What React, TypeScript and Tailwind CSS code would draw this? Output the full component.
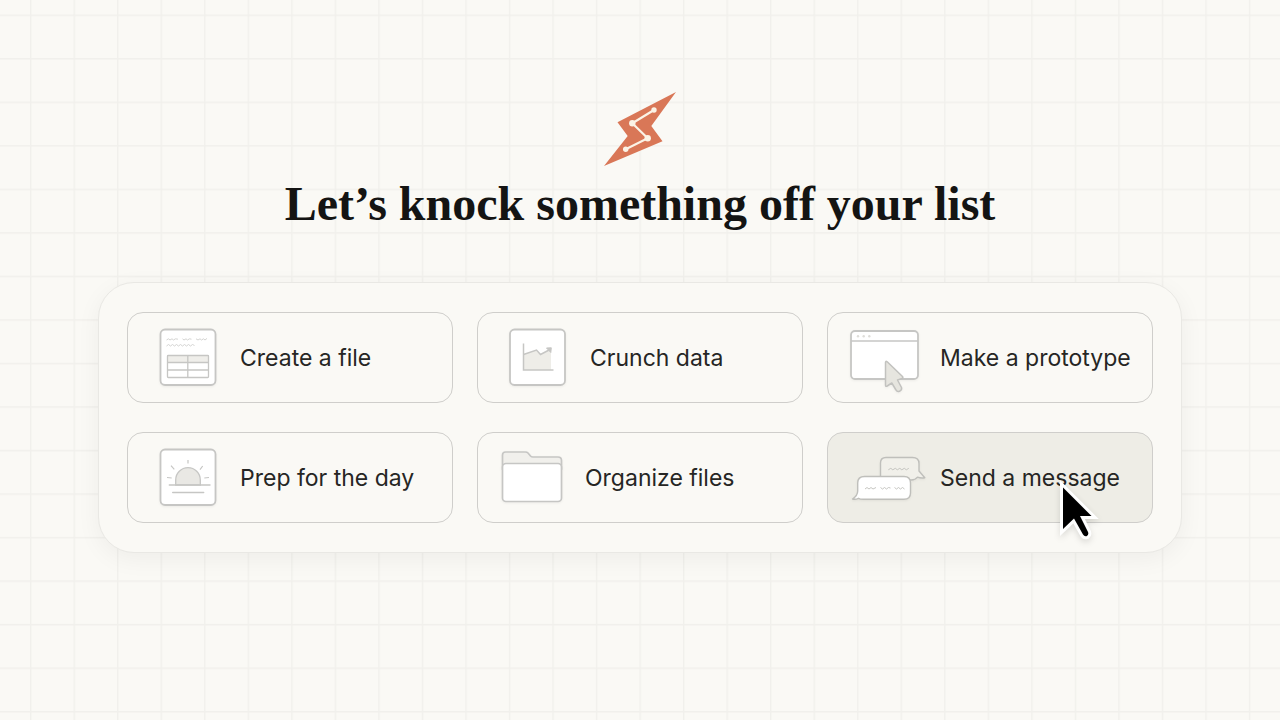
import type { ReactNode } from 'react';

type Task = {
  label: string;
  icon: ReactNode;
  active?: boolean;
};

function GridBackground() {
  return (
    <svg
      className="absolute inset-0 h-full w-full"
      viewBox="0 0 1280 720"
      preserveAspectRatio="xMidYMid slice"
      aria-hidden="true"
    >
      <defs>
        <pattern id="grid" x="30" y="14.5" width="43.53" height="43.53" patternUnits="userSpaceOnUse">
          <path d="M0.7 0V43.53M0 0.7H43.53" stroke="#f1f0ec" strokeWidth="1.4" fill="none" />
        </pattern>
      </defs>
      <rect width="1280" height="720" fill="url(#grid)" />
    </svg>
  );
}

function Logo() {
  return (
    <svg className="h-[74px] w-[72px]" viewBox="0 0 72 74" aria-hidden="true">
      <path d="M72 0L47.3 34L58.5 49.3L0 74L23.7 44L13.5 30.3Z" fill="#d97757" />
      <path d="M50 18L28.3 31.3L43.7 46.3L21.7 57.3" fill="none" stroke="#fbf3e6" strokeWidth="2.2" />
      <g fill="#fbf3e6">
        <circle cx="50" cy="18" r="2.7" />
        <circle cx="28.3" cy="31.3" r="3.2" />
        <circle cx="43.7" cy="46.3" r="3.2" />
        <circle cx="21.7" cy="57.3" r="2.7" />
      </g>
    </svg>
  );
}

function FileIcon() {
  return (
    <svg
      className="h-[57px] w-20 shrink-0 overflow-visible drop-shadow-xs"
      viewBox="0 0 80 57"
      fill="none"
      stroke="#c6c6c4"
      aria-hidden="true"
    >
      <rect x="12.5" y="0.5" width="55" height="55.5" rx="4.5" fill="#fff" strokeWidth="1.8" />
      <g stroke="#cfcfcd" strokeWidth="0.9">
        <path d="M18.5 11l2-1.2 1.5 1.2 2-1.2 1.5 1.2 2-1.2 2.5.4M34.5 9.8l1.5 1.2 2-1.2 1.5 1.2 2-1.2 2 .4M48 9.800l2 1.2 2-1.2 1.5 1.2 2-1.2 1.5 1.2 2-1.6" />
        <path d="M18.500 17l2-1.500 2 1.500 2-1.500 2 1.500 2-1.500 2 1.500 2-1.500 2 1.500 2-1.500 2 1.500 2-1.500 2 1.500 2-1.500 2 1" />
      </g>
      <path d="M19.500 26.500H60.500V33.500H19.500Z" fill="#efeeea" />
      <rect x="19.500" y="26.500" width="41" height="22" rx="0.8" strokeWidth="1.3" />
      <path d="M19.500 33.500H60.500M19.500 41H60.500M39.800 26.500V48.500" strokeWidth="1.3" />
    </svg>
  );
}

function ChartIcon() {
  return (
    <svg
      className="h-[57px] w-20 shrink-0 overflow-visible drop-shadow-xs"
      viewBox="0 0 80 57"
      fill="none"
      stroke="#c6c6c4"
      aria-hidden="true"
    >
      <rect x="12" y="0.5" width="55" height="55.5" rx="4.5" fill="#fff" strokeWidth="1.8" />
      <path d="M25.5 25.5L38.5 21L42.5 25.5L53 20V41H25.5Z" fill="#eeede8" stroke="none" />
      <path d="M25.5 14.5V41H55.5" strokeWidth="1.5" />
      <path d="M25.5 25.5L38.5 21L42.5 25.5L52 20.5" strokeWidth="1.5" />
      <path d="M48.5 19L53.3 18.8L52.8 23.5Z" fill="#c6c6c4" />
    </svg>
  );
}

function PrototypeIcon() {
  return (
    <svg
      className="h-[57px] w-20 shrink-0 overflow-visible drop-shadow-xs"
      viewBox="0 0 80 57"
      fill="none"
      stroke="#c6c6c4"
      aria-hidden="true"
    >
      <rect x="3" y="2" width="67" height="48" rx="4" fill="#fff" strokeWidth="1.8" />
      <path d="M3 12H70" strokeWidth="1.4" />
      <g fill="#deddd9" stroke="none">
        <circle cx="10" cy="7.3" r="1.2" />
        <circle cx="15.7" cy="7.3" r="1.2" />
        <circle cx="21.3" cy="7.3" r="1.2" />
      </g>
      <path
        d="M37.5 33.5Q37.5 31.5 39.2 32.8L54.5 47.5Q55.5 49 54 49.5L49.5 51L53.5 58.5Q54.2 61 51.5 62.3Q49 63 48 61L43.800 54L39.2 57Q37.500 58 37.5 56Z"
        fill="#e6e5df"
        stroke="#c2c2bf"
        strokeWidth="1.5"
        strokeLinejoin="round"
      />
    </svg>
  );
}

function SunriseIcon() {
  return (
    <svg
      className="h-[57px] w-20 shrink-0 overflow-visible drop-shadow-xs"
      viewBox="0 0 80 57"
      fill="none"
      stroke="#c6c6c4"
      aria-hidden="true"
    >
      <rect x="12.5" y="0.5" width="55" height="55.5" rx="4.5" fill="#fff" strokeWidth="1.8" />
      <path d="M27.7 36V31a12.3 12.3 0 0 1 24.6 0V36Z" fill="#e9e8e4" strokeWidth="1.3" />
      <path d="M21.3 36H62M24.7 43.5H55.7" strokeWidth="1.4" strokeLinecap="round" />
      <path
        d="M40 11V14.5M23 16.7L26.3 20.3M54.7 17L52 20.7M19 28.5L23.7 29M56.3 29L61 28.500"
        strokeWidth="1.2"
      />
    </svg>
  );
}

function FolderIcon() {
  return (
    <svg
      className="h-[57px] w-[75px] shrink-0 overflow-visible drop-shadow-xs"
      viewBox="0 0 75 57"
      fill="none"
      stroke="#c6c6c4"
      strokeWidth="1.7"
      aria-hidden="true"
    >
      <path
        d="M4.5 20V6Q4.5 3 7.5 3H27.5Q29 3 30 4L32.5 7Q33.5 8 35 8H60Q63.5 8 63.5 11.5V20Z"
        fill="#f1f0ec"
      />
      <rect x="4.5" y="14.5" width="59" height="38" rx="3.5" fill="#fff" />
    </svg>
  );
}

function MessageIcon() {
  return (
    <svg
      className="h-[57px] w-20 shrink-0 overflow-visible drop-shadow-xs"
      viewBox="0 0 80 57"
      fill="none"
      stroke="#bfbfbb"
      strokeLinejoin="round"
      aria-hidden="true"
    >
      <path
        d="M38 8.5H64.5Q71 8.5 71 14.5V22L76.8 28.8Q73 29.5 69.5 28.2Q67.5 31 63 31H32.5V14Q32.5 8.5 38 8.5Z"
        fill="#f1f0ea"
        strokeWidth="1.4"
      />
      <path
        d="M40.3 20.8l2.5-1.5 2 1.5 2.5-1.5 2 1.5 2.5-1.5 2 1.5 2.5-1.5 2 1.5 2.5-1.5"
        strokeWidth="0.9"
      />
      <path
        d="M16.5 27.5H56Q62.5 27.5 62.5 34V44Q62.5 50.3 56 50.3H15Q12 50.3 10.5 49.3Q7.5 50.8 4.5 50Q9.7 46.5 9.7 42V34Q9.7 27.5 16.5 27.5Z"
        fill="#fff"
        strokeWidth="1.4"
      />
      <path
        d="M17 40l2-1.5 2 1.5 2-1.5 2 1.5 3-1.5M32.5 38.5l2 1.5 2-1.5 2 1.5 2-1.5 2 .5M46.5 38.5l2 1.5 2-1.5 2 1.5 2-1.5 2 1.5"
        strokeWidth="0.9"
      />
    </svg>
  );
}

function Cursor() {
  return (
    <svg
      className="pointer-events-none absolute top-12 right-12 h-16 w-12 overflow-visible drop-shadow-md"
      viewBox="0 0 48 64"
      aria-hidden="true"
    >
      <path
        d="M7 6.5V48L18 37.500L27 53.500Q28.500 56 31 55Q33 53.500 32 51L24 35H35.500Z"
        fill="#000"
        stroke="#fff"
        strokeWidth="6"
        paintOrder="stroke"
      />
    </svg>
  );
}

const tasks: Task[] = [
  { label: 'Create a file', icon: <FileIcon /> },
  { label: 'Crunch data', icon: <ChartIcon /> },
  { label: 'Make a prototype', icon: <PrototypeIcon /> },
  { label: 'Prep for the day', icon: <SunriseIcon /> },
  { label: 'Organize files', icon: <FolderIcon /> },
  { label: 'Send a message', icon: <MessageIcon />, active: true },
];

export default function App() {
  return (
    <div className="relative min-h-screen overflow-hidden bg-[#faf9f5]">
      <GridBackground />

      <main className="relative flex flex-col items-center px-6 pt-23 pb-12">
        {/* Header */}
        <Logo />
        <h1 className="mt-2 text-center font-['Liberation_Serif',serif] text-[48px] leading-[60px] font-bold text-[#141413]">
          Let’s knock something off your list
        </h1>

        {/* Task picker */}
        <div className="mt-12 grid w-full max-w-[1084px] grid-cols-3 gap-x-6 gap-y-[29px] rounded-[36px] border border-[#e9e8e4] bg-[#faf9f5] px-7 py-[29px] shadow-[0_6px_24px_rgba(20,20,19,0.05)]">
          {tasks.map((task) => (
            <button
              key={task.label}
              type="button"
              className={`relative flex items-center gap-3 rounded-2xl border border-[#cfcecb] px-5 py-4 text-left font-['Inter',sans-serif] text-[23px] leading-8 whitespace-nowrap text-[#262624] ${
                task.active ? 'bg-[#eeede6]' : 'bg-[#faf9f5]'
              }`}
            >
              {task.icon}
              <span>{task.label}</span>
              {task.active && <Cursor />}
            </button>
          ))}
        </div>
      </main>
    </div>
  );
}
